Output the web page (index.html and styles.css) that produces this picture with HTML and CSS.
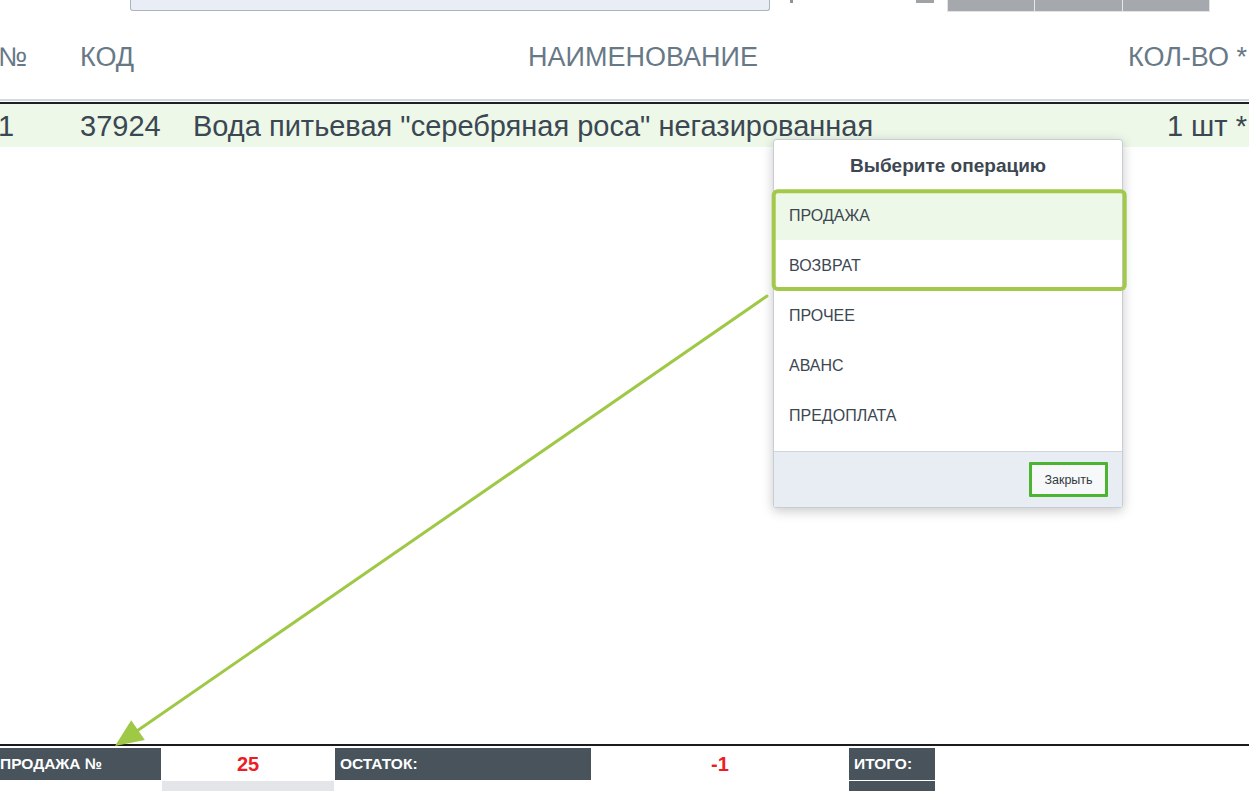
FILE: index.html
```html
<!DOCTYPE html>
<html lang="ru">
<head>
<meta charset="utf-8">
<title>Касса</title>
<link rel="stylesheet" href="styles.css">
</head>
<body>
<div class="app">
  <div class="topbar">
    <div class="search"></div>
    <div class="tick tick-a"></div>
    <div class="tick tick-b"></div>
    <div class="btn-group"><span></span><span></span><span></span></div>
  </div>

  <div class="table">
    <div class="trow thead">
      <div class="c-num">№</div>
      <div class="c-code">КОД</div>
      <div class="c-name center">НАИМЕНОВАНИЕ</div>
      <div class="c-qty">КОЛ-ВО *</div>
    </div>
    <div class="trow tbody-row selected">
      <div class="c-num">1</div>
      <div class="c-code">37924</div>
      <div class="c-name">Вода питьевая "серебряная роса" негазированная</div>
      <div class="c-qty">1 шт *</div>
    </div>
  </div>

  <div class="main"></div>

  <div class="summary">
    <div class="s-label first">ПРОДАЖА №</div>
    <div class="s-value">25</div>
    <div class="s-label">ОСТАТОК:</div>
    <div class="s-value">-1</div>
    <div class="s-label">ИТОГО:</div>
    <div class="s-empty"></div>
    <div class="s-muted"></div>
    <div class="s-empty"></div>
    <div class="s-empty"></div>
    <div class="s-dark"></div>
  </div>
</div>

<div class="modal">
  <div class="modal-title">Выберите операцию</div>
  <ul class="op-list">
    <li class="op active">ПРОДАЖА</li>
    <li class="op">ВОЗВРАТ</li>
    <li class="op">ПРОЧЕЕ</li>
    <li class="op">АВАНС</li>
    <li class="op">ПРЕДОПЛАТА</li>
  </ul>
  <div class="modal-footer">
    <button class="btn-close">Закрыть</button>
  </div>
</div>

<svg class="annotation" width="1249" height="791" viewBox="0 0 1249 791">
  <rect x="773.7" y="191.3" width="351" height="97.7" rx="4" ry="4" fill="none" stroke="#a3c94b" stroke-width="4"/>
  <line x1="767" y1="296" x2="134" y2="733" stroke="#9ec846" stroke-width="3" stroke-linecap="round"/>
  <polygon points="115,746 144.8,740 131.2,720.2" fill="#9ec846"/>
</svg>
</body>
</html>
```

FILE: styles.css
```css
* { box-sizing: border-box; }

html, body {
  margin: 0;
  padding: 0;
  width: 1249px;
  height: 791px;
  overflow: hidden;
  background: #ffffff;
  font-family: "Liberation Sans", Arial, sans-serif;
}

.app {
  display: flex;
  flex-direction: column;
  height: 791px;
}

/* top strip */
.topbar {
  display: flex;
  align-items: flex-start;
  height: 12px;
  flex: none;
}
.search {
  margin-left: 130px;
  width: 640px;
  height: 11px;
  background: #e9eef6;
  border: 1px solid #a8b5c1;
  border-top: none;
  border-radius: 0 0 3px 3px;
}
.tick {
  background: #8f9396;
}
.tick-a {
  margin-left: 20px;
  width: 3px;
  height: 3px;
}
.tick-b {
  margin-left: 123px;
  width: 18px;
  height: 3px;
  background: #a0a3a6;
}
.btn-group {
  margin-left: 13px;
  width: 263px;
  height: 12px;
  display: grid;
  grid-template-columns: 1fr 1fr 1fr;
  column-gap: 1px;
  background: #e6e8ea;
  border: 1px solid #e1e3e6;
  border-top: none;
}
.btn-group span {
  background: #a5a9ad;
}

/* table */
.table {
  flex: none;
}
.trow {
  display: grid;
  grid-template-columns: 80px 113px 1fr 156px;
}
.thead {
  height: 89px;
  padding-top: 30px;
  font-size: 27px;
  line-height: 31px;
  color: #677986;
  border-bottom: 2px solid #d5d9dd;
}
.tbody-row {
  margin-top: 1px;
  height: 45px;
  padding-top: 6px;
  font-size: 29px;
  line-height: 33px;
  color: #3b4752;
  border-top: 2px solid #1d1f21;
}
.selected {
  background: #edf8e8;
}
.c-num { text-indent: -2px; white-space: nowrap; }
.c-code { white-space: nowrap; }
.c-name { white-space: nowrap; }
.c-name.center { text-align: center; }
.c-qty { text-align: right; padding-right: 2px; white-space: nowrap; }

.main {
  flex: 1;
}

/* summary */
.summary {
  flex: none;
  height: 47px;
  overflow: hidden;
  border-top: 2px solid #1b1b1b;
  padding-top: 2px;
  display: grid;
  grid-template-columns: 161px 172px 256px 256px 86px;
  grid-template-rows: 32px 32px;
  column-gap: 1px;
  row-gap: 1px;
}
.s-label {
  background: #48535c;
  color: #ffffff;
  font-weight: bold;
  font-size: 15.5px;
  line-height: 32px;
  padding-left: 5px;
  white-space: nowrap;
}
.s-label.first {
  padding-left: 0;
}
.s-value {
  color: #ee1c24;
  font-weight: bold;
  font-size: 20px;
  line-height: 32px;
  text-align: center;
}
.s-muted { background: #e4e5e9; }
.s-dark { background: #48535c; }

/* modal */
.modal {
  position: absolute;
  left: 773px;
  top: 139px;
  width: 350px;
  height: 369px;
  background: #ffffff;
  border: 1px solid #c6cdd4;
  border-radius: 3px;
  box-shadow: 0 3px 12px rgba(0, 0, 0, 0.22);
  display: flex;
  flex-direction: column;
  overflow: hidden;
}
.modal-title {
  height: 50px;
  flex: none;
  display: flex;
  align-items: center;
  justify-content: center;
  font-weight: bold;
  font-size: 19px;
  color: #3d4751;
  padding-top: 1px;
}
.op-list {
  list-style: none;
  margin: 0;
  padding: 0;
  flex: 1;
}
.op {
  height: 50px;
  line-height: 51px;
  padding-left: 15px;
  font-size: 16px;
  color: #3d4751;
}
.op.active {
  background: #edf8e8;
}
.modal-footer {
  flex: none;
  height: 56px;
  background: #e8edf4;
  border-top: 1px solid #cfd5dc;
  display: flex;
  justify-content: flex-end;
  align-items: flex-start;
  padding: 10px 14px 0 0;
}
.btn-close {
  width: 79px;
  height: 35px;
  border: 3px solid #4cb430;
  background: #f7f8fa;
  font-family: "Liberation Sans", Arial, sans-serif;
  font-size: 12.5px;
  color: #333b42;
  padding: 0;
  margin: 0;
  border-radius: 1px;
}

/* annotation overlay */
.annotation {
  position: absolute;
  left: 0;
  top: 0;
  pointer-events: none;
}
```
